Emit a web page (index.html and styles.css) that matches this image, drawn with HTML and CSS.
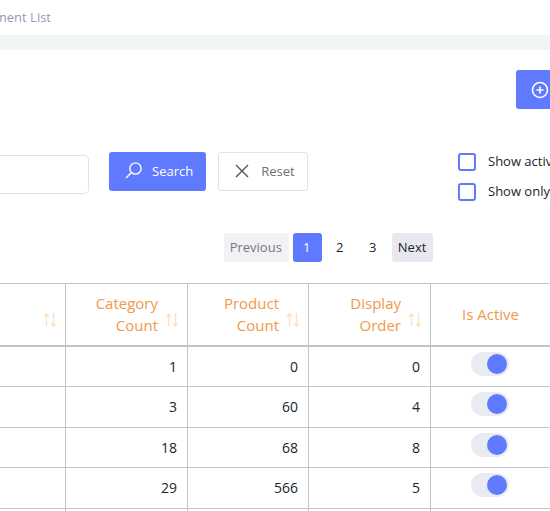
FILE: index.html
```html
<!DOCTYPE html>
<html lang="en">
<head>
<meta charset="utf-8">
<title>List</title>
<link rel="stylesheet" href="styles.css">
</head>
<body>
<header class="breadcrumb"><span>ment List</span></header>
<main class="card">
  <div class="actions">
    <button class="btn btn-primary btn-add" type="button" aria-label="Add">
      <svg width="18" height="18" viewBox="0 0 18 18"><circle cx="9" cy="9" r="7.5"/><path d="M9 5.5v7M5.5 9h7"/></svg>
    </button>
  </div>
  <form class="filters">
    <input class="search-box" type="text" aria-label="Search text">
    <button class="btn btn-primary" type="button">
      <svg width="17" height="17" viewBox="0 0 17 17"><circle cx="10.5" cy="6.5" r="5.6"/><path d="M6.5 10.5L1 16"/></svg>
      Search
    </button>
    <button class="btn btn-outline" type="button">
      <svg width="14" height="14" viewBox="0 0 14 14"><path d="M1 1l12 12M13 1L1 13"/></svg>
      Reset
    </button>
    <div class="checks">
      <label><input class="check" type="checkbox">Show activ</label>
      <label><input class="check" type="checkbox">Show only</label>
    </div>
  </form>
  <nav class="pager">
    <button type="button" class="prev" disabled>Previous</button>
    <button type="button" class="current">1</button>
    <button type="button">2</button>
    <button type="button">3</button>
    <button type="button" class="next">Next</button>
  </nav>
  <table class="list">
    <colgroup><col class="c-name"><col class="c-cat"><col class="c-prod"><col class="c-order"><col></colgroup>
    <thead>
      <tr>
        <th><svg class="sort" width="14" height="14" viewBox="0 0 14 14"><path d="M3.500 13V1M1 3.500L3.500 1L6 3.500M10.500 0v12.500M8 10.500L10.500 13L13 10.500"/></svg></th>
        <th>Category Count<svg class="sort" width="14" height="14" viewBox="0 0 14 14"><path d="M3.500 13V1M1 3.500L3.500 1L6 3.500M10.500 0v12.500M8 10.500L10.500 13L13 10.500"/></svg></th>
        <th>Product Count<svg class="sort" width="14" height="14" viewBox="0 0 14 14"><path d="M3.500 13V1M1 3.500L3.500 1L6 3.500M10.500 0v12.500M8 10.500L10.500 13L13 10.500"/></svg></th>
        <th>Display Order<svg class="sort" width="14" height="14" viewBox="0 0 14 14"><path d="M3.500 13V1M1 3.500L3.500 1L6 3.500M10.500 0v12.500M8 10.500L10.500 13L13 10.500"/></svg></th>
        <th class="active">Is Active</th>
      </tr>
    </thead>
    <tbody>
      <tr><td></td><td>1</td><td>0</td><td>0</td><td class="active"><input class="switch" type="checkbox" aria-label="Is Active" checked></td></tr>
      <tr><td></td><td>3</td><td>60</td><td>4</td><td class="active"><input class="switch" type="checkbox" aria-label="Is Active" checked></td></tr>
      <tr><td></td><td>18</td><td>68</td><td>8</td><td class="active"><input class="switch" type="checkbox" aria-label="Is Active" checked></td></tr>
      <tr><td></td><td>29</td><td>566</td><td>5</td><td class="active"><input class="switch" type="checkbox" aria-label="Is Active" checked></td></tr>
      <tr class="tail"><td></td><td></td><td></td><td></td><td></td></tr>
    </tbody>
  </table>
</main>
</body>
</html>
```
FILE: styles.css
```css
* {
  box-sizing: border-box;
}

body {
  margin: 0;
  background: #fff;
  color: #212529;
  font: 13px/20px "Open Sans", sans-serif;
  overflow: hidden;
}

button,
input {
  margin: 0;
  font: inherit;
}

.breadcrumb {
  display: flex;
  justify-content: flex-end;
  width: 51px;
  height: 35px;
  padding-top: 7px;
  overflow: hidden;
  color: #959cb6;
  white-space: nowrap;
}

.card {
  border-top: 15px solid #f0f6f6;
}

.actions {
  display: flex;
  justify-content: flex-end;
  padding-top: 20px;
}

.btn {
  display: flex;
  align-items: center;
  height: 39px;
  padding: 0 13px 2px 16px;
  gap: 10px;
  border: 0;
  border-radius: 3px;
}

.btn svg,
.sort {
  fill: none;
  stroke: currentColor;
  stroke-width: 1.4;
}

.btn-primary {
  background: #5f7aff;
  color: #fff;
}

.btn-outline {
  margin-left: 12px;
  padding: 0 12px 1px 16px;
  gap: 12px;
  border: 1px solid #e2e2ec;
  background: #fff;
  color: #6c7077;
}

.btn-outline svg {
  stroke: #555;
}

.btn-add {
  padding: 0 1px 0 15px;
  border-radius: 3px 0 0 3px;
}

.btn-add svg {
  stroke-width: 1.6;
}

.filters {
  display: flex;
  align-items: flex-start;
  padding-top: 43px;
}

.search-box {
  width: 89px;
  height: 39px;
  margin: 3px 20px 0 0;
  border: 1px solid #e2e2ec;
  border-left: 0;
  border-radius: 0 5px 5px 0;
}

.checks {
  display: flex;
  flex-direction: column;
  gap: 10px;
  margin-left: auto;
  width: 92px;
}

.checks label {
  display: flex;
  align-items: flex-start;
  gap: 12px;
  line-height: 18px;
  height: 20px;
  white-space: nowrap;
}

.check {
  appearance: none;
  flex: none;
  width: 18px;
  height: 18px;
  margin-top: 1px;
  border: 2px solid #5f7aff;
  border-radius: 3px;
}

.pager {
  display: flex;
  justify-content: center;
  gap: 4px;
  padding: 31px 0 21px 107px;
}

.pager button {
  min-width: 29px;
  height: 29px;
  padding: 0 7px 2px 6px;
  border: 0;
  border-radius: 3px;
  background: none;
  color: #212529;
}

.pager .prev {
  background: #f2f1f6;
  color: #77777b;
}

.pager .current {
  background: #5f7aff;
  color: #fff;
}

.pager .next {
  background: #e9e8f1;
}

.list {
  width: 100%;
  table-layout: fixed;
  border-collapse: separate;
  border-spacing: 0;
  border-top: 1px solid #c4c4c4;
}

.c-name {
  width: 66px;
}

.c-cat,
.c-order {
  width: 122px;
}

.c-prod {
  width: 121px;
}

.list th,
.list td {
  border-right: 1px solid #c4c4c4;
  border-bottom: 1px solid #c4c4c4;
  text-align: right;
}

.list th {
  position: relative;
  height: 63px;
  padding: 0 29px 2px 20px;
  border-bottom-width: 2px;
  color: #f0994b;
  font-size: 15px;
  font-weight: 400;
  line-height: 22px;
}

.list td {
  height: 40px;
  padding: 0 10px;
  font-size: 14px;
}

.list tr:nth-child(even) td {
  height: 41px;
}

.list .active {
  padding: 0 0 2px;
  border-right: 0;
  text-align: center;
}

.list td.active {
  padding: 5px 2px 0 0;
  vertical-align: top;
}

.list .tail td {
  height: 3px;
  border-bottom: 0;
}

.list .tail td:last-child {
  border-right: 0;
}

.sort {
  position: absolute;
  right: 8px;
  bottom: 18px;
  color: #fde0c4;
}

.switch {
  appearance: none;
  display: block;
  width: 38px;
  height: 24px;
  margin: 0 auto;
  padding: 2px;
  border-radius: 12px;
  background: #e8ebf1;
}

.switch::before {
  content: "";
  display: block;
  width: 20px;
  height: 20px;
  border-radius: 50%;
  background: #5f7aff;
}

.switch:checked::before {
  margin-left: auto;
}
```
